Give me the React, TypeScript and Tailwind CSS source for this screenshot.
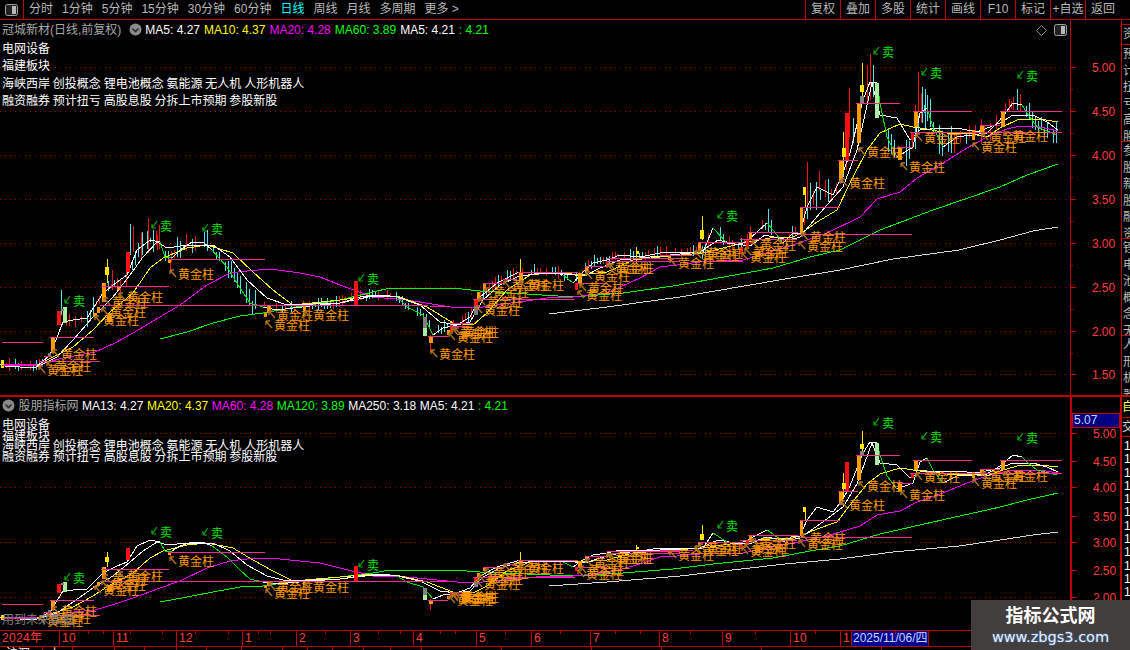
import React from "react";

type Pt = [number, number];

const RED_TICK = "#ff3c3c";
const PINK = "#ff2a8f";

const tabs = ["分时", "1分钟", "5分钟", "15分钟", "30分钟", "60分钟", "日线", "周线", "月线", "多周期", "更多 >"];
const rightBtns = ["复权", "叠加", "多股", "统计", "画线", "F10", "标记", "+自选", "返回"];

const fast: Pt[] = [[0,364],[5,366],[35,368],[50,355],[63,322],[73,320],[87,318],[103,293],[117,282],[127,275],[137,250],[150,240],[160,242],[165,257],[172,258],[180,250],[192,242],[203,242],[212,250],[227,267],[240,288],[250,303],[263,307],[277,310],[310,306],[340,303],[360,297],[383,295],[397,297],[407,307],[423,315],[433,335],[443,328],[457,325],[470,317],[480,297],[497,283],[517,273],[537,272],[553,272],[563,275],[573,283],[583,272],[593,263],[607,260],[620,255],[640,257],[660,253],[680,252],[703,252],[713,228],[727,243],[740,245],[748,240],[757,232],[767,223],[773,230],[783,243],[793,233],[800,233],[807,207],[817,187],[833,195],[843,173],[850,153],[863,100],[870,82],[877,83],[880,103],[887,137],[897,157],[913,147],[920,113],[927,108],[933,127],[943,147],[957,137],[987,133],[1000,120],[1013,103],[1022,105],[1027,113],[1037,127],[1057,135]];
const falling: Pt[] = [[160,170],[205,262],[397,433],[563,573],[713,727],[767,783],[877,897],[927,943],[1022,1057]];

const slow: Pt[] = [[37,367],[57,357],[73,340],[93,317],[113,297],[130,275],[143,257],[157,242],[167,248],[187,245],[213,245],[230,257],[247,280],[267,298],[287,305],[340,303],[373,296],[397,297],[420,305],[440,322],[457,325],[470,322],[483,300],[500,285],[517,277],[540,273],[565,274],[585,276],[600,268],[620,260],[640,258],[660,256],[680,254],[700,252],[718,240],[735,244],[750,246],[765,235],[778,238],[790,240],[800,237],[820,213],[843,187],[857,150],[872,83],[880,115],[897,118],[910,140],[920,130],[940,128],[957,128],[977,132],[1000,123],[1013,115],[1033,115],[1047,122],[1058,130]];
const yellow: Pt[] = [[37,365],[73,347],[93,330],[110,312],[133,293],[150,268],[163,258],[187,248],[207,245],[233,253],[253,272],[273,290],[293,305],[340,300],[373,295],[400,297],[427,307],[453,323],[473,325],[487,313],[507,290],[530,275],[557,272],[580,275],[607,272],[633,260],[660,257],[703,253],[743,243],[770,238],[793,237],[803,232],[817,222],[837,210],[850,183],[867,150],[880,133],[900,124],[913,127],[927,129],[947,133],[967,133],[987,137],[1000,128],[1017,120],[1040,119],[1058,122]];
const magenta: Pt[] = [[0,364],[15,364],[37,365],[63,358],[95,352],[115,343],[133,333],[160,317],[180,305],[207,285],[230,273],[247,271],[270,269],[300,273],[320,277],[340,285],[373,297],[407,300],[457,308],[483,307],[547,298],[573,297],[607,293],[640,278],[660,267],[677,265],[700,262],[743,260],[793,245],[827,233],[860,217],[877,199],[900,192],[917,178],[943,163],[967,148],[987,137],[1007,129],[1020,126],[1040,127],[1058,131]];
const green: Pt[] = [[160,339],[187,332],[213,323],[240,316],[263,313],[290,308],[340,300],[373,292],[390,288],[453,288],[480,291],[527,294],[573,297],[623,293],[673,286],[713,279],[773,268],[810,257],[840,250],[880,230],[933,210],[1000,187],[1027,175],[1058,164]];
const longWhite: Pt[] = [[549,314],[607,307],[680,297],[785,279],[840,270],[893,259],[959,250],[1000,240],[1033,231],[1058,227]];

// x, x2, y
const levels: [number, number, number][] = [[2,43,342],[50,94,337],[2,37,365],[40,100,361],[44,52,356],[101,169,286],[100,428,305],[430,450,306],[168,265,259],[428,448,336],[450,473,323],[452,470,326],[473,575,299],[483,503,283],[503,517,279],[518,578,272],[577,607,283],[585,607,266],[607,680,258],[607,680,261],[698,743,242],[660,693,255],[740,797,239],[748,798,232],[798,912,234],[697,743,261],[800,840,207],[838,858,160],[856,900,103],[897,912,147],[913,972,111],[910,1062,132],[1000,1062,111],[980,1000,125]];

const OR = "#ff9a00";
const RD = "#ff1010";
const YL = "#ffe600";
const GY = "#808080";
const PG = "#a8f0a0";
// x, width, top, bottom, colour
const bodies: [number, number, number, number, string][] = [[857,4,103,143,OR],[860,4,85,92,YL],[860,4,96,103,GY],[875,4,83,118,PG],[845,4,113,160,RD],[842,4,148,157,YL],[839,4,160,180,OR],[839,4,180,183,GY],[800,3,207,233,OR],[803,3,187,195,YL],[914,4,112,127,OR],[911,3,133,140,RD],[898,4,147,160,OR],[1001,4,112,127,OR],[972,3,130,140,OR],[980,4,125,132,OR],[126,4,252,272,RD],[105,4,267,275,YL],[102,4,283,302,OR],[63,4,307,323,PG],[57,4,311,325,RD],[61,3,309,311,GY],[51,4,337,353,OR],[48,3,353,357,GY],[107,5,313,322,OR],[117,3,286,290,OR],[93,4,313,317,OR],[97,3,307,313,OR],[168,3,259,263,OR],[267,4,305,313,OR],[264,3,313,317,OR],[303,3,305,312,OR],[354,4,281,305,RD],[423,4,328,336,PG],[423,4,317,328,GY],[429,4,337,343,OR],[450,3,325,332,RD],[447,3,330,335,OR],[474,4,306,315,GY],[474,4,299,306,RD],[477,3,292,299,OR],[483,3,283,290,OR],[519,4,273,282,OR],[578,4,273,283,OR],[575,3,283,290,RD],[636,3,251,254,YL],[668,3,255,260,OR],[585,3,267,271,OR],[606,3,261,266,RD],[700,4,230,239,YL],[698,3,242,250,OR],[746,3,239,247,RD],[749,3,232,240,OR],[740,3,247,253,RD],[1,3,360,368,YL]];

// thin lines that belong to the bodies, drawn in both panels
const CY = "#4fe3ea";
const stems: [number, number, number, string][] = [[862,63,103,YL],[843,132,173,YL],[805,187,207,YL],[107,259,283,YL],[520,259,273,YL],[636,247,263,YL],[702,216,240,YL],[430,335,352,RD],[170,263,270,RD]];
const wicks: [number, number, number, string][] = [[870,54,100,RD],[867,65,103,RD],[873,65,97,CY],[849,88,137,RD],[853,118,143,CY],[807,162,208,RD],[810,183,210,CY],[816,182,210,CY],[820,190,200,CY],[825,180,197,RD],[836,183,195,RD],[918,72,112,RD],[915,105,112,RD],[922,87,123,CY],[925,89,130,CY],[1005,103,112,RD],[1009,99,112,RD],[1013,97,110,RD],[1017,89,110,CY],[130,224,255,CY],[133,226,252,RD],[142,232,255,CY],[148,218,253,RD],[153,233,252,CY],[157,235,250,RD],[138,243,257,CY],[61,290,315,CY],[112,270,290,RD],[120,280,292,RD]];

const goldLabels: Pt[] = [[47,370],[55,366],[61,354],[103,320],[110,312],[112,302],[127,297],[178,274],[274,325],[277,315],[313,315],[439,354],[457,337],[460,332],[463,332],[484,310],[487,302],[493,292],[512,285],[528,285],[586,295],[588,288],[594,276],[615,268],[618,268],[678,263],[703,255],[707,253],[750,257],[753,252],[760,245],[807,246],[810,237],[849,183],[867,152],[909,167],[924,138],[981,147],[990,137],[1012,136]];
const sellTop: Pt[] = [[73,301],[160,226],[211,229],[367,279],[726,216],[882,52],[930,73],[1026,76]];
const sellLow: Pt[] = [[73,578],[160,532],[211,533],[367,565],[726,526],[882,423],[930,437],[1026,438]];

const topTicks = [[67,"5.00"],[111,"4.50"],[155,"4.00"],[199,"3.50"],[243,"3.00"],[287,"2.50"],[331,"2.00"],[374,"1.50"]] as const;
const lowTicks = [[433,"5.00"],[461,"4.50"],[487,"4.00"],[516,"3.50"],[542,"3.00"],[570,"2.50"],[597,"2.00"]] as const;

const months: [number, string][] = [[60,"2024年"],[54,"10"],[63,"11"],[66,"12"],[54,"1"],[54,"2"],[63,"3"],[63,"4"],[55,"5"],[59,"6"],[69,"7"],[63,"8"],[68,"9"],[50,"10"],[11,"1"]];
const dateTicks = [88,103,130,162,195,228,258,270,325,378,400,440,455,505,560,615,640,690,755,815,895];
const bottomCells = [43,30,42,30,32,30,35,41,25,25,31,27,31,80,90,70,100,120,130,120];

const rnd = (i: number) => {
  const s = Math.sin(i * 12.9898) * 43758.5453;
  return s - Math.floor(s);
};

const interp = (pts: Pt[], x: number) => {
  for (let i = 1; i < pts.length; i++) {
    if (x <= pts[i][0]) {
      const [x0, y0] = pts[i - 1];
      const [x1, y1] = pts[i];
      return y0 + ((y1 - y0) * (x - x0)) / (x1 - x0 || 1);
    }
  }
  return pts[pts.length - 1][1];
};

const inRange = (ranges: Pt[], x: number) => ranges.some(([a, b]) => x >= a && x < b);

const volRanges: [number, number, number][] = [[60,95,12],[120,160,16],[175,210,14],[225,262,14],[700,730,12],[745,780,14],[800,850,16],[880,900,26],[905,960,20],[960,1000,14],[1000,1058,12]];

const noise = (() => {
  const out: [number, number, number, string][] = [];
  for (let x = 3; x < 1059; x += 3) {
    if (rnd(x) < 0.3 || (x > 855 && x < 880)) continue;
    const base = interp(fast, x);
    const vol = volRanges.find(([a, b]) => x >= a && x < b)?.[2] ?? 6;
    const up = 2 + rnd(x + 1) * vol;
    const down = 1 + rnd(x + 2) * vol * 0.7;
    const col = inRange(falling, x) || rnd(x + 3) > 0.55 ? CY : RD;
    out.push([x, Math.round(base - up), Math.round(base + down), col]);
  }
  return out;
})();

const toLow = (y: number) => Math.round(433 + (y - 67) * 0.62);

const poly = (pts: Pt[], map: (y: number) => number) => pts.map(([x, y]) => `${x},${map(y)}`).join(" ");

const Gold = ({ x, y }: { x: number; y: number }) => (
  <g>
    <path d={`M${x - 8} ${y - 4}L${x - 2} ${y + 3}M${x - 8} ${y - 4}v4M${x - 8} ${y - 4}h4`} stroke="#b0701a" fill="none" strokeWidth={1.4} />
    <text x={x} y={y + 5} fontSize={12} fill="#ff9a00">黄金柱</text>
  </g>
);

const Sell = ({ x, y }: { x: number; y: number }) => (
  <g>
    <path d={`M${x - 3} ${y - 5}L${x - 8} ${y + 2}M${x - 8} ${y + 2}v-4M${x - 8} ${y + 2}h4`} stroke="#00b000" fill="none" strokeWidth={1.2} />
    <text x={x} y={y + 5} fontSize={12} fill="#00e800">卖</text>
  </g>
);

const Lines = ({ map }: { map: (y: number) => number }) => (
  <g fill="none" shapeRendering="crispEdges">
    <polyline points={poly(longWhite, map)} stroke="#d4d4d4" />
    <polyline points={poly(green, map)} stroke="#00ff00" />
    <polyline points={poly(magenta, map)} stroke="#ff00ff" />
    <polyline points={poly(yellow, map)} stroke="#ffff00" />
    <polyline points={poly(slow, map)} stroke="#ffffff" />
    {fast.slice(1).map(([x, y], i) => (
      <line key={x} x1={fast[i][0]} y1={map(fast[i][1])} x2={x} y2={map(y)} stroke={inRange(falling, fast[i][0]) ? "#00e000" : "#ffffff"} />
    ))}
  </g>
);

const Bars = ({ map }: { map: (y: number) => number }) => (
  <g shapeRendering="crispEdges">
    {stems.map(([x, a, b, c]) => (
      <line key={`${x}-${a}`} x1={x + 0.5} x2={x + 0.5} y1={map(a)} y2={map(b)} stroke={c} />
    ))}
    {bodies.map(([x, w, a, b, c]) => (
      <rect key={`${x}-${a}`} x={x} y={map(a)} width={w} height={Math.max(map(b) - map(a), 2)} fill={c} />
    ))}
    {levels.map(([a, b, y]) => (
      <line key={`${a}-${y}`} x1={a} x2={b} y1={map(y) + 0.5} y2={map(y) + 0.5} stroke={PINK} />
    ))}
  </g>
);

const CircleIcon = () => (
  <svg width="13" height="13" viewBox="0 0 13 13" className="shrink-0">
    <circle cx="6.5" cy="6.5" r="6" fill="#8a8a8a" />
    <path d="M3.5 5.5L6.5 8.5L9.5 5.5" stroke="#2a2a2a" strokeWidth="1.6" fill="none" />
  </svg>
);

const PanelIcon = () => (
  <svg width="13" height="12" viewBox="0 0 13 12" className="shrink-0">
    <rect x="0.5" y="0.5" width="12" height="11" rx="2" fill="#222" stroke="#a0a0a0" />
    <rect x="7" y="2" width="4" height="8" fill="#b8b8b8" />
  </svg>
);

const Legend = ({ items }: { items: [string, string][] }) => (
  <>
    {items.map(([t, c]) => (
      <span key={t} className="whitespace-pre" style={{ color: c }}>{t}</span>
    ))}
  </>
);

const Tags = ({ className }: { className: string }) => (
  <div className={`pl-[2px] text-[12px] text-white whitespace-pre [word-spacing:-0.5px] ${className}`}>
    <div>电网设备</div>
    <div>福建板块</div>
    <div>海峡西岸 创投概念 锂电池概念 氨能源 无人机 人形机器人</div>
    <div>融资融券 预计扭亏 高股息股 分拆上市预期 参股新股</div>
  </div>
);

const Axis = ({ top, h, ticks, minor }: { top: number; h: number; ticks: readonly (readonly [number, string])[]; minor: number[] }) => (
  <svg width="49" height={h} viewBox={`1072 ${top} 49 ${h}`} className="block">
    <g shapeRendering="crispEdges" stroke="#d00000">
      {ticks.map(([y]) => <line key={y} x1="1072" x2="1077" y1={y + 0.5} y2={y + 0.5} />)}
      {minor.map((y) => <line key={y} x1="1072" x2="1074" y1={y + 0.5} y2={y + 0.5} />)}
    </g>
    {ticks.map(([y, t]) => (
      <text key={t} x="1093" y={y + 4.5} fontSize="12" letterSpacing="-0.1" fill={RED_TICK}>{t}</text>
    ))}
  </svg>
);

const SideCell = ({ text, h }: { text: string; h: string }) => (
  <div className={`${h} border-b border-[#c00000] overflow-hidden text-[#bdbdbd] text-[12px] leading-[16.5px] pl-[1px] pt-[1px] w-[8px]`}>
    {text.split("").map((c, i) => <div key={i} className="w-[12px]">{c}</div>)}
  </div>
);

export default function App() {
  return (
    <div className="relative w-[1130px] h-[650px] overflow-hidden bg-black font-['Liberation_Sans','Noto_Sans_CJK_SC',sans-serif]">
      {/* toolbar */}
      <div className="flex h-[20px] border-b border-[#c00000] text-[12px] leading-[19px] text-[#b8b8b8]">
        <div className="flex w-[24px] items-center justify-center border-r border-[#c00000] pr-[1px]"><PanelIcon /></div>
        <div className="flex gap-[9px] pl-[5px]">
          {tabs.map((t) => (
            <span key={t} className={t === "日线" ? "text-[#00ffff]" : ""}>{t}</span>
          ))}
        </div>
        <div className="ml-auto mr-[10px] flex">
          {rightBtns.map((t) => (
            <span key={t} className="w-[35px] border-l border-[#c00000] text-center whitespace-nowrap">{t}</span>
          ))}
        </div>
      </div>

      {/* upper panel */}
      <div className="flex h-[377px] border-b-2 border-[#c00000]">
        <div className="relative w-[1070px]">
          <svg width="1070" height="375" viewBox="0 20 1070 375" className="absolute inset-0">
            <g stroke="#a80000" strokeDasharray="1 4" shapeRendering="crispEdges">
              {topTicks.map(([y]) => <line key={y} x1="0" x2="1068" y1={y + 0.5} y2={y + 0.5} />)}
            </g>
            <g shapeRendering="crispEdges">
              {noise.concat(wicks).map(([x, a, b, c]) => (
                <line key={`${x}-${a}-${b}`} x1={x + 0.5} x2={x + 0.5} y1={a} y2={b} stroke={c} />
              ))}
            </g>
            <Lines map={(y) => y} />
            <Bars map={(y) => y} />
            {goldLabels.map(([x, y]) => <Gold key={`${x}-${y}`} x={x} y={y} />)}
            {sellTop.map(([x, y]) => <Sell key={x} x={x} y={y} />)}
          </svg>
          <div className="relative">
            <div className="flex h-[19px] items-center gap-[4px] pl-[2px] text-[12px] text-[#a8a8a8]">
              <span className="whitespace-pre pr-[4px]">冠城新材(日线,前复权)</span>
              <div className="-mr-[1px]"><CircleIcon /></div>
              <Legend items={[["MA5: 4.27", "#ffffff"], ["MA10: 4.37", "#ffff00"], ["MA20: 4.28", "#ff00ff"], ["MA60: 3.89", "#00ff00"], ["MA5: 4.21", "#fffffe"], [": 4.21", "#00ff00"]]} />
            </div>
            <Tags className="pt-[2px] leading-[17.3px]" />
            <div className="absolute right-[3px] top-[4px] flex items-center gap-[7px]">
              <svg width="11" height="11" viewBox="0 0 11 11"><path d="M5.5 0.5L10.5 5.5L5.5 10.5L0.5 5.5Z" fill="none" stroke="#8a8a8a" /></svg>
              <PanelIcon />
            </div>
          </div>
        </div>
        <div className="w-[52px] border-x border-[#c00000]">
          <Axis top={20} h={375} ticks={topTicks} minor={[89,133,177,221,265,309,353]} />
        </div>
        <div className="flex w-[8px] flex-col">
          <div className="h-[5px] border-b border-[#c00000]" />
          <SideCell text="资" h="h-[20px]" />
          <SideCell text="预计扭亏高股" h="h-[97px]" />
          <SideCell text="参股新股融资" h="h-[97px]" />
          <SideCell text="锂电池概念无" h="h-[97px]" />
          <SideCell text="人形机器" h="h-[59px] border-b-0" />
        </div>
      </div>

      {/* lower panel */}
      <div className="flex h-[234px] border-b border-[#c00000]">
        <div className="relative w-[1070px]">
          <svg width="1070" height="233" viewBox="0 397 1070 233" className="absolute inset-0">
            <g stroke="#a80000" strokeDasharray="1 4" shapeRendering="crispEdges">
              {[433, 487, 542, 597].map((y) => <line key={y} x1="0" x2="1068" y1={y + 0.5} y2={y + 0.5} />)}
            </g>
            <Lines map={toLow} />
            <Bars map={toLow} />
            {goldLabels.filter(([x]) => x !== 439).map(([x, y]) => <Gold key={`${x}-${y}`} x={x} y={toLow(y)} />)}
            <Gold x={460} y={598} />
            {sellLow.map(([x, y]) => <Sell key={x} x={x} y={y} />)}
          </svg>
          <div className="relative">
            <div className="flex h-[17px] items-center gap-[3.5px] pl-[2px] text-[12px] text-[#a8a8a8]">
              <CircleIcon />
              <span className="whitespace-pre">股朋指标网</span>
              <Legend items={[["MA13: 4.27", "#ffffff"], ["MA20: 4.37", "#ffff00"], ["MA60: 4.28", "#ff00ff"], ["MA120: 3.89", "#00ff00"], ["MA250: 3.18", "#fefefe"], ["MA5: 4.21", "#fffffe"], [": 4.21", "#00ff00"]]} />
            </div>
            <Tags className="pt-[6px] leading-[10.6px]" />
          </div>
          <span className="absolute bottom-[1px] left-[2px] text-[12px] text-[#808080]">用到未来数据</span>
        </div>
        <div className="relative w-[52px] border-x-2 border-[#c00000]">
          <Axis top={397} h={233} ticks={lowTicks} minor={[]} />
          <div className="absolute left-0 top-[16px] h-[15px] w-[48px] border border-[#c00000] bg-[#000080] pl-[1px] text-[12px] leading-[13px] text-[#c8d8ff]">5.07</div>
        </div>
        <div className="w-[8px]">
          <div className="h-[21px] border-b border-[#c00000] text-[12px] leading-[20px] text-[#ffff40] overflow-hidden"><div className="w-[12px]">自</div></div>
          <div className="h-[19px] border-b border-[#c00000] text-[12px] leading-[18px] text-[#d0d0d0] overflow-hidden"><div className="w-[12px]">交</div></div>
          <div className="pt-[3px] pl-[2px] text-[12px] leading-[13.3px] text-white">
            {Array.from({ length: 13 }, (_, i) => <div key={i}>1</div>)}
          </div>
        </div>
      </div>

      {/* date axis */}
      <div className="relative flex h-[16px] border-b border-[#c00000] text-[12px] leading-[15px] text-[#ff3c3c]">
        <svg width="1070" height="3" viewBox="0 0 1070 3" className="absolute left-0 top-0">
          {dateTicks.map((x) => <line key={x} x1={x + 0.5} x2={x + 0.5} y1="0" y2="3" stroke="#c00000" shapeRendering="crispEdges" />)}
        </svg>
        {months.map(([w, t], i) => (
          <div key={i} className="shrink-0 border-r border-[#c00000] pl-[2px] tracking-[0.3px]" style={{ width: w }}>{t}</div>
        ))}
        <div className="w-[77px] shrink-0 border-r border-[#c00000] bg-[#000090] pl-[1px] text-[#c8d8ff] whitespace-nowrap">2025/11/06/四</div>
      </div>

      {/* cut-off quote row */}
      <div className="flex h-[3px] overflow-hidden text-[12px] leading-[14px] text-white">
        {bottomCells.map((w, i) => (
          <div key={i} className="shrink-0 border-r border-[#c00000] pl-[6px]" style={{ width: w }}>{i === 0 ? "沪深" : i === 1 ? "上" : ""}</div>
        ))}
      </div>

      {/* site watermark */}
      <div className="absolute bottom-0 right-0 flex h-[50px] w-[159px] flex-col items-center justify-center bg-[#423e3e]">
        <div className="text-[18px] font-bold leading-[23px] text-white">指标公式网</div>
        <div className="font-['DejaVu_Sans',sans-serif] text-[14.5px] leading-[18px] text-[#e4eefa] [text-shadow:0_0_2px_#4a90e2]">www.zbgs3.com</div>
      </div>
    </div>
  );
}
